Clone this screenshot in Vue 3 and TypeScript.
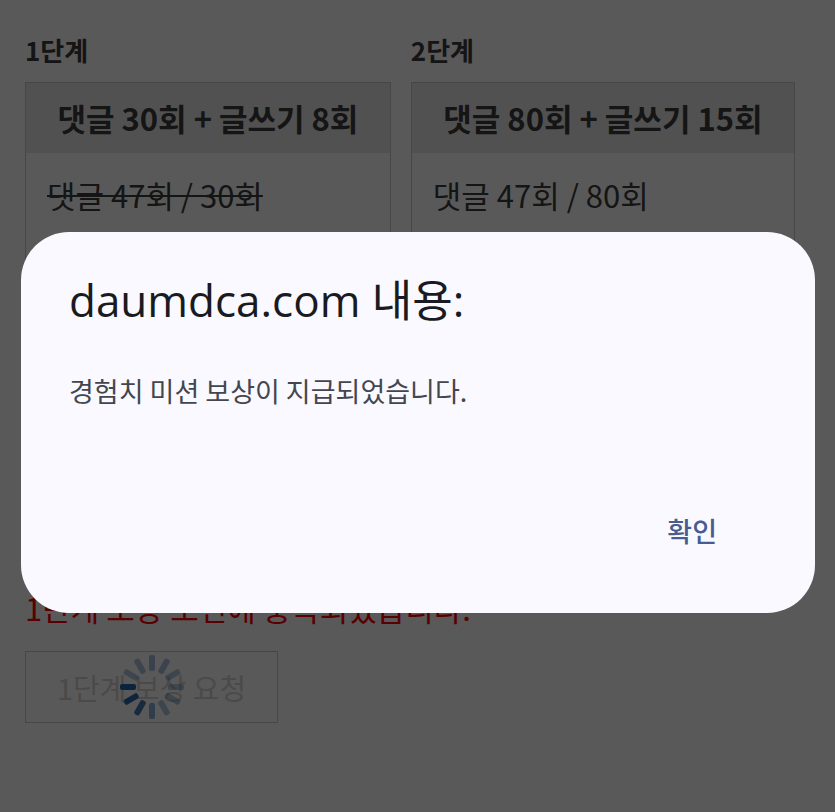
<script setup lang="ts">
import { ref } from 'vue'

interface Step {
  id: number
  title: string
  goal: string
  progress: string
  done: boolean
}

const steps: Step[] = [
  { id: 1, title: '1단계', goal: '댓글 30회 + 글쓰기 8회', progress: '댓글 47회 / 30회', done: true },
  { id: 2, title: '2단계', goal: '댓글 80회 + 글쓰기 15회', progress: '댓글 47회 / 80회', done: false },
]

// Spoke opacities, clockwise from twelve o'clock
const spokes: number[] = [0.42, 0.4, 0.36, 0.34, 0.36, 0.36, 0.52, 0.86, 0.95, 1, 0.36, 0.38]

const dialogOpen = ref(true)
</script>

<template>
  <main class="page">
    <div class="steps">
      <section v-for="step in steps" :key="step.id" class="step">
        <h2 class="step-title">{{ step.title }}</h2>
        <div class="card">
          <h3 class="card-head">{{ step.goal }}</h3>
          <p class="card-row" :class="{ done: step.done }">
            <span>{{ step.progress }}</span>
          </p>
        </div>
      </section>
    </div>

    <p class="notice">1단계 보상 조건에 충족되었습니다.</p>

    <button class="claim" type="button" disabled>
      1단계 보상 요청
      <svg class="spinner" viewBox="-33 -33 66 66" aria-hidden="true">
        <rect
          v-for="(opacity, i) in spokes"
          :key="i"
          x="-3"
          y="-32"
          width="6"
          height="16"
          rx="2"
          fill="#2464ac"
          :fill-opacity="opacity"
          :transform="`rotate(${i * 30})`"
        />
      </svg>
    </button>
  </main>

  <div v-if="dialogOpen" class="backdrop">
    <div class="dialog" role="alertdialog" aria-modal="true" aria-labelledby="dialog-title" aria-describedby="dialog-text">
      <h1 id="dialog-title" class="dialog-title">daumdca.com 내용:</h1>
      <p id="dialog-text" class="dialog-text">경험치 미션 보상이 지급되었습니다.</p>
      <div class="actions">
        <button class="confirm" type="button" @click="dialogOpen = false">확인</button>
      </div>
    </div>
  </div>
</template>

<style>
body {
  background: #fff;
}
</style>

<style scoped>
h1,
h2,
h3,
p {
  margin: 0;
}

.page {
  padding: 32px 40px 32px 25px;
  color: #3c3c3c;
  font-family: "Noto Sans CJK KR", sans-serif;
}

.steps {
  display: grid;
  grid-template-columns: auto auto;
  gap: 20px;
}

.step-title {
  margin-bottom: 14px;
  font-size: 26px;
  line-height: 36px;
  font-weight: 700;
}

.card {
  min-height: 420px;
  border: 1px solid #cccccc;
}

.card-head {
  padding: 13px 31px;
  background: #e9e9e9;
  font-size: 31px;
  line-height: 44px;
  font-weight: 700;
  text-align: center;
  white-space: nowrap;
}

.card-row {
  padding: 20px 21px;
  font-size: 31px;
  line-height: 44px;
}

.done span {
  text-decoration: line-through;
  text-decoration-thickness: 2px;
}

.notice {
  margin-top: 82px;
  color: #f00;
  font-size: 31px;
  line-height: 44px;
}

.claim {
  position: relative;
  display: block;
  margin-top: 21px;
  padding: 13px 31px;
  border: 1px solid #cccccc;
  background: #fff;
  color: #d8d4d0;
  font-family: inherit;
  font-size: 29px;
  line-height: 44px;
}

.spinner {
  position: absolute;
  top: 50%;
  left: 50%;
  width: 66px;
  height: 66px;
  transform: translate(-50%, -50%);
}

.backdrop {
  position: fixed;
  inset: 0;
  display: flex;
  align-items: center;
  padding: 33px 20px 0 21px;
  background: rgba(0, 0, 0, 0.65);
}

.dialog {
  flex: 1;
  padding: 38px 48px 46px;
  border-radius: 48px;
  background: #f9f9ff;
  font-family: "Noto Sans CJK KR", sans-serif;
}

.dialog-title {
  color: #1a1b20;
  font-family: "Open Sans", "Noto Sans CJK KR", sans-serif;
  font-size: 44px;
  line-height: 60px;
  font-weight: 400;
}

.dialog-text {
  margin-top: 41px;
  color: #44464f;
  font-size: 27px;
  line-height: 40px;
}

.actions {
  display: flex;
  justify-content: flex-end;
  margin-top: 84px;
}

.confirm {
  padding: 16px 50px;
  border: 0;
  background: none;
  color: #475d92;
  font-family: inherit;
  font-size: 27px;
  line-height: 40px;
  font-weight: 500;
  cursor: pointer;
}
</style>
